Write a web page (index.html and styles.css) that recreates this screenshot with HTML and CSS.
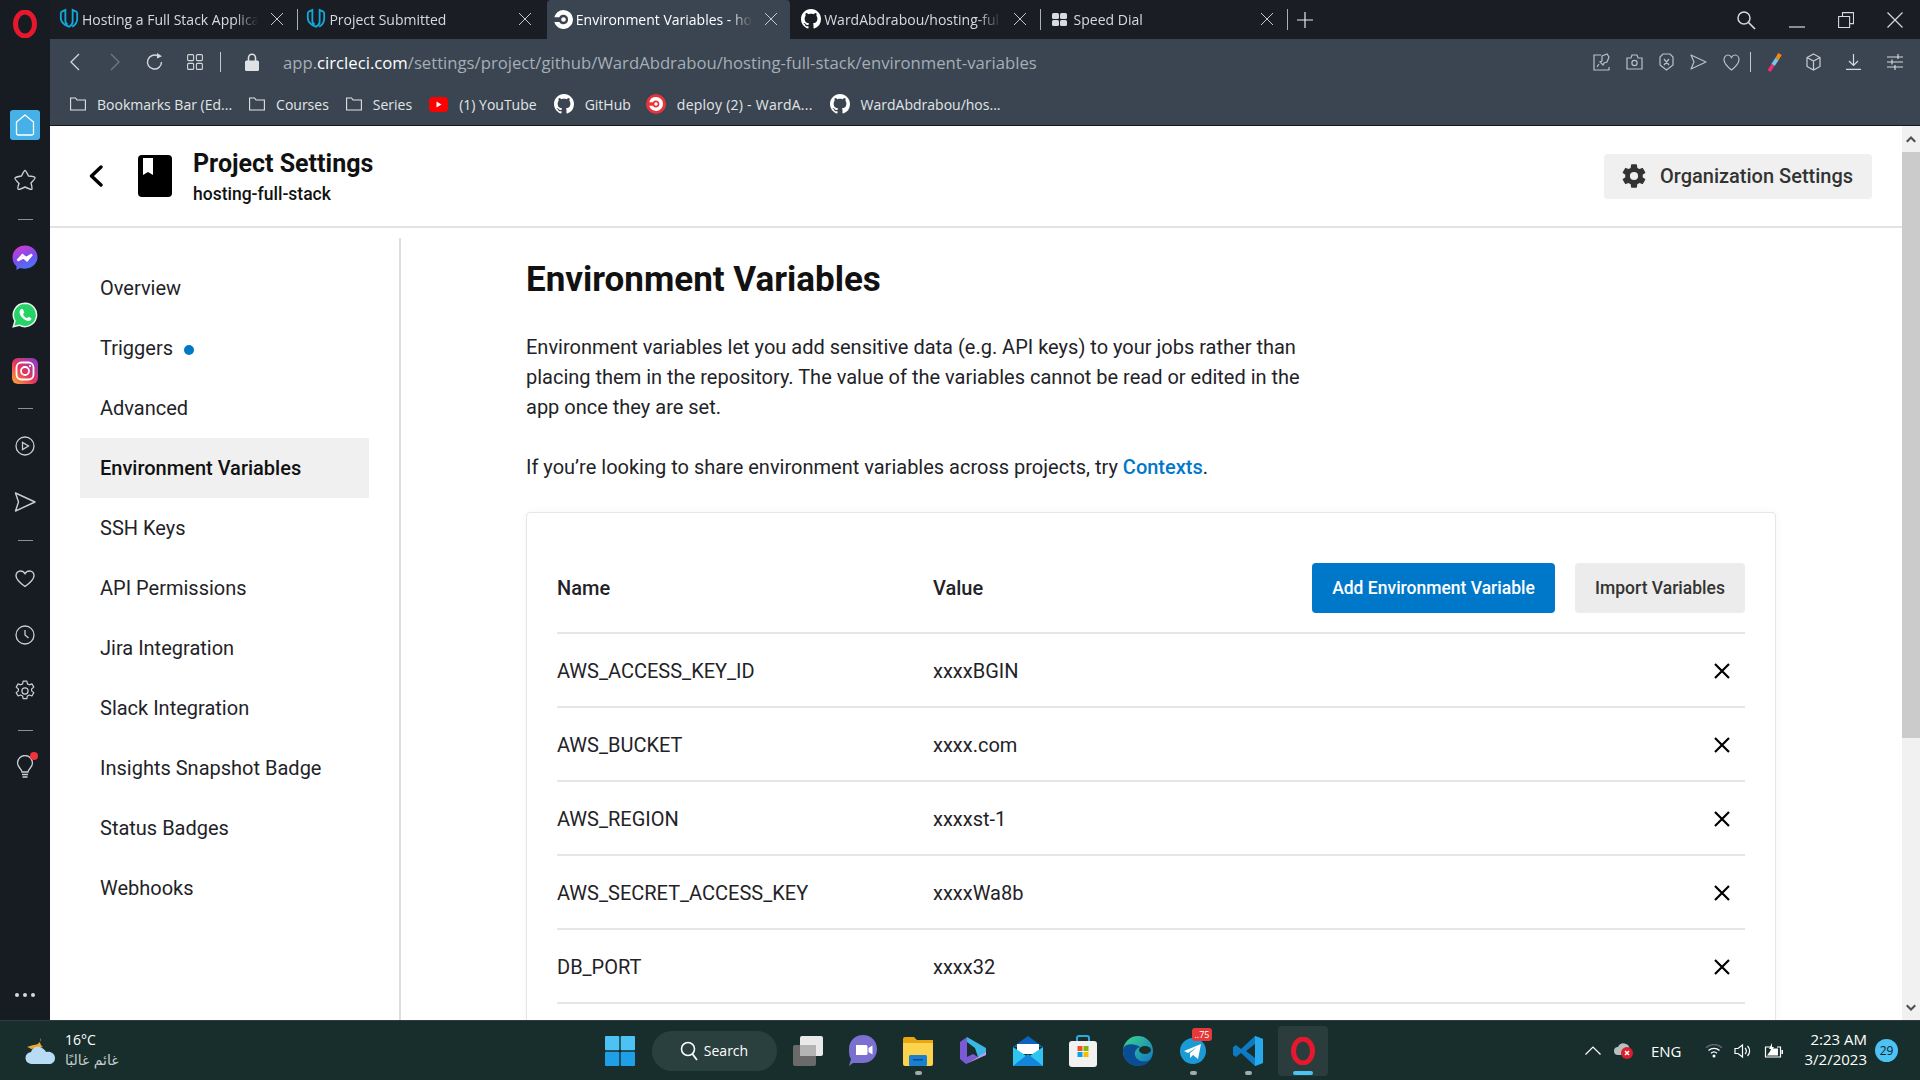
FILE: index.html
```html
<!DOCTYPE html>
<html>
<head>
    <title>Environment Variables - hosting-full-stack</title>
    <link rel="stylesheet" href="styles.css">
</head>

<body>
    <!-- Shared icons -->
    <svg class="sprites" width="0" height="0">
        <symbol id="i-github" viewBox="0 0 16 16"><path fill="#fff" d="M8 0C3.58 0 0 3.58 0 8c0 3.54 2.29 6.53 5.47 7.59.4.07.55-.17.55-.38 0-.19-.01-.82-.01-1.49-2.01.37-2.53-.49-2.69-.94-.09-.23-.48-.94-.82-1.13-.28-.15-.68-.52-.01-.53.63-.01 1.08.58 1.23.82.72 1.21 1.87.87 2.33.66.07-.52.28-.87.51-1.07-1.78-.2-3.64-.89-3.64-3.95 0-.87.31-1.59.82-2.15-.08-.2-.36-1.02.08-2.12 0 0 .67-.21 2.2.82.64-.18 1.32-.27 2-.27.68 0 1.36.09 2 .27 1.53-1.04 2.2-.82 2.2-.82.44 1.1.16 1.92.08 2.12.51.56.82 1.27.82 2.15 0 3.07-1.87 3.75-3.65 3.95.29.25.54.73.54 1.48 0 1.07-.01 1.93-.01 2.2 0 .21.15.46.55.38A8.013 8.013 0 0016 8c0-4.42-3.58-8-8-8z"/></symbol>
        <symbol id="i-udacity" viewBox="0 0 22 24"><path fill="none" stroke="#12a8dc" stroke-width="2" d="M2 4.5 7 2v12c0 2 1 3.500 2.500 4M20 4.500 15 2v13c0 3-2 4.500-4 5.500-2-1-4-1.500-6-3.500-2-1.500-3-3-3-6V4.500M20 4.500V12c0 4-3 7-5.500 8.500"/></symbol>
        <symbol id="i-close" viewBox="0 0 14 14"><path fill="none" stroke="#c4c9ce" stroke-width="1" d="M1 1l12 12M13 1 1 13"/></symbol>
        <symbol id="i-folder" viewBox="0 0 16 14"><path fill="none" stroke="#dfe3e7" stroke-width="1.100" d="M.6 1h5l1.400 2h8.400v10H.6z"/></symbol>
        <symbol id="i-x" viewBox="0 0 16 16"><path fill="none" stroke="#000" stroke-width="2.200" d="M1 1l14 14M15 1 1 15"/></symbol>
        <symbol id="i-circleci" viewBox="0 0 20 20"><path fill="#fff" d="M10 0a10 10 0 1 1-9.700 12.500h5.200a5 5 0 1 0 0-5H.3A10 10 0 0 1 10 0z"/><circle cx="10" cy="10" r="2.400" fill="#fff"/></symbol>
        <symbol id="i-opera" viewBox="0 0 24 28"><ellipse cx="12" cy="14" rx="9.500" ry="12" fill="none" stroke="#e6182d" stroke-width="5"/></symbol>
    </svg>

    <div class="window">
        <!-- Opera side rail -->
        <aside class="rail">
            <svg class="rail-logo" width="24" height="28"><use href="#i-opera"/></svg>
            <div class="rail-home">
                <svg width="20" height="22" viewBox="0 0 20 22"><path fill="none" stroke="#fff" stroke-width="1.300" d="M10 1 1.500 8v11.500q0 1.500 1.500 1.500h14q1.500 0 1.500-1.500V8z"/></svg>
            </div>
            <svg class="rail-star" width="22" height="22" viewBox="0 0 22 22"><path fill="none" stroke="#c9ced3" stroke-width="1.400" stroke-linejoin="round" d="M11 1.500c.8 0 3.500 5.500 3.500 5.500s6 .5 6.500 1.500-4 5.500-4 5.500 1.500 5.500.8 6.200S11 18 11 18s-5.800 2.900-6.800 2.200S5 14.500 5 14.500.5 10 1 9s6.500-2 6.500-2 2.700-5.500 3.500-5.500z"/></svg>
            <div class="rail-dash dash-a"></div>
            <svg class="rail-app app-msg" width="26" height="26" viewBox="0 0 26 26">
                <defs><linearGradient id="g-msg" x1="0.300" y1="0" x2="0.700" y2="1"><stop offset="0" stop-color="#d13ad0"/><stop offset="0.500" stop-color="#7a4df0"/><stop offset="1" stop-color="#3f7df5"/></linearGradient></defs>
                <path fill="url(#g-msg)" d="M13 .5C6 .5.500 5.600.500 12.500c0 3.500 1.500 6.600 4 8.800V25l3.500-2c1.600.5 3.200.7 5 .7 7 0 12.500-5.200 12.500-11.600C25.500 5.600 20 .5 13 .5z"/>
                <path fill="none" stroke="#fff" stroke-width="2.200" d="M5.500 15.500 10.500 10l3.500 3 6-3.500-5 6-3.500-3z"/>
            </svg>
            <svg class="rail-app app-wa" width="26" height="26" viewBox="0 0 26 26">
                <path fill="#25d366" stroke="#e9f3ec" stroke-width="1.500" d="M13 1.200a11.700 11.700 0 0 0-10 17.700L1.300 24.800l6-1.600A11.700 11.700 0 1 0 13 1.200z"/>
                <path fill="#fff" d="M9.500 7c-.7 0-2 1-2 3 0 3 3.500 8 8.500 9 2 .3 3.300-1 3.500-2.500l-3-1.700-1.300 1.500c-1.700-.5-3.700-2.500-4.200-4.300l1.300-1.300L11 7.200z"/>
            </svg>
            <svg class="rail-app app-ig" width="26" height="26" viewBox="0 0 26 26">
                <defs><linearGradient id="g-ig" x1="0" y1="1" x2="1" y2="0"><stop offset="0" stop-color="#f9b233"/><stop offset="0.450" stop-color="#e8355c"/><stop offset="1" stop-color="#7a3fd0"/></linearGradient></defs>
                <rect width="26" height="26" rx="6" fill="url(#g-ig)"/>
                <rect x="4.500" y="4.500" width="17" height="17" rx="5" fill="none" stroke="#fff" stroke-width="1.800"/>
                <circle cx="13" cy="13" r="4" fill="none" stroke="#fff" stroke-width="1.800"/>
                <circle cx="18" cy="8" r="1.100" fill="#fff"/>
            </svg>
            <div class="rail-dash dash-b"></div>
            <svg class="rail-icon icon-play" width="20" height="20" viewBox="0 0 20 20"><circle cx="10" cy="10" r="9" fill="none" stroke="#c9ced3" stroke-width="1.300"/><path fill="none" stroke="#c9ced3" stroke-width="1.300" d="M7.500 6.500v7l6-3.500z"/></svg>
            <svg class="rail-icon icon-send" width="22" height="20" viewBox="0 0 22 20"><path fill="none" stroke="#c9ced3" stroke-width="1.400" stroke-linejoin="round" d="M1.500 1 21 10 1.500 19l3-9z"/></svg>
            <div class="rail-dash dash-c"></div>
            <svg class="rail-icon icon-heart" width="20" height="18" viewBox="0 0 20 18"><path fill="none" stroke="#c9ced3" stroke-width="1.400" d="M10 16.500C5 13 1 10 1 5.800 1 3 3 1 5.500 1 7.500 1 9 2 10 3.700 11 2 12.500 1 14.500 1 17 1 19 3 19 5.800 19 10 15 13 10 16.500z"/></svg>
            <svg class="rail-icon icon-clock" width="20" height="20" viewBox="0 0 20 20"><circle cx="10" cy="10" r="9" fill="none" stroke="#c9ced3" stroke-width="1.300"/><path fill="none" stroke="#c9ced3" stroke-width="1.300" d="M10 5v5l3.500 3"/></svg>
            <svg class="rail-icon icon-gear" width="22" height="22" viewBox="0 0 20 20"><path fill="none" stroke="#c9ced3" stroke-width="1.100" stroke-linejoin="round" d="M8.300 1h3.400l.5 2.500 1.700.9 2.400-.9 1.700 3-2 1.600v1.800l2 1.600-1.700 3-2.400-.9-1.700.9-.5 2.500H8.300l-.5-2.500-1.700-.9-2.400.9-1.700-3 2-1.600V8.100l-2-1.600 1.700-3 2.400.9 1.700-.9z"/><circle cx="10" cy="10" r="2.800" fill="none" stroke="#c9ced3" stroke-width="1.100"/></svg>
            <div class="rail-dash dash-d"></div>
            <div class="rail-bulb">
                <svg width="18" height="24" viewBox="0 0 18 24"><path fill="none" stroke="#c9ced3" stroke-width="1.300" d="M6 17c0-3-4.500-4.500-4.500-9a7.500 7.500 0 0 1 15 0c0 4.500-4.500 6-4.500 9zM6 19.500h6M6.500 22h5"/></svg>
                <span class="bulb-dot"></span>
            </div>
            <div class="rail-dots"><span></span><span></span><span></span></div>
        </aside>

        <div class="browser">
            <!-- Tabs -->
            <div class="tabbar">
                <div class="tab">
                    <svg class="tab-icon" width="20" height="22"><use href="#i-udacity"/></svg>
                    <span class="tab-title">Hosting a Full Stack Applica</span>
                    <svg class="tab-close" width="14" height="14"><use href="#i-close"/></svg>
                </div>
                <div class="tab">
                    <svg class="tab-icon" width="20" height="22"><use href="#i-udacity"/></svg>
                    <span class="tab-title">Project Submitted</span>
                    <svg class="tab-close" width="14" height="14"><use href="#i-close"/></svg>
                </div>
                <div class="tab tab-active">
                    <svg class="tab-icon" width="19" height="19"><use href="#i-circleci"/></svg>
                    <span class="tab-title">Environment Variables - ho</span>
                    <svg class="tab-close" width="14" height="14"><use href="#i-close"/></svg>
                </div>
                <div class="tab">
                    <svg class="tab-icon" width="20" height="20"><use href="#i-github"/></svg>
                    <span class="tab-title">WardAbdrabou/hosting-ful</span>
                    <svg class="tab-close" width="14" height="14"><use href="#i-close"/></svg>
                </div>
                <div class="tab tab-split">
                    <svg class="tab-icon" width="15" height="13" viewBox="0 0 15 13"><rect width="7" height="6" rx="1.500" fill="#d8dcdf"/><rect x="8" width="7" height="6" rx="1.500" fill="#d8dcdf"/><rect y="7" width="7" height="6" rx="1.500" fill="#d8dcdf"/><rect x="8" y="7" width="7" height="6" rx="1.500" fill="#d8dcdf"/></svg>
                    <span class="tab-title">Speed Dial</span>
                    <svg class="tab-close" width="14" height="14"><use href="#i-close"/></svg>
                </div>
                <div class="tab-new">
                    <svg width="16" height="16" viewBox="0 0 16 16"><path fill="none" stroke="#e6e9ec" stroke-width="1.200" d="M8 0v16M0 8h16"/></svg>
                </div>
                <div class="win-controls">
                    <svg width="20" height="20" viewBox="0 0 20 20"><circle cx="8" cy="8" r="6" fill="none" stroke="#d5d9dc" stroke-width="1.500"/><path stroke="#d5d9dc" stroke-width="1.700" d="M12.500 12.500 19 19"/></svg>
                    <svg width="16" height="16" viewBox="0 0 16 16"><path stroke="#d5d9dc" stroke-width="1.200" d="M0 15h16"/></svg>
                    <svg width="16" height="16" viewBox="0 0 16 16"><path fill="none" stroke="#d5d9dc" stroke-width="1.100" d="M.6 4.500h11v11H.6zM4.500 4.500V.6h11v11h-3.900"/></svg>
                    <svg width="16" height="16" viewBox="0 0 16 16"><path fill="none" stroke="#d5d9dc" stroke-width="1.200" d="M.5.500l15 15M15.500.500l-15 15"/></svg>
                </div>
            </div>

            <!-- Address bar -->
            <div class="toolbar">
                <svg class="nav-back" width="10" height="18" viewBox="0 0 10 18"><path fill="none" stroke="#d3d7db" stroke-width="1.300" d="M9 1 1 9l8 8"/></svg>
                <svg class="nav-forward" width="10" height="18" viewBox="0 0 10 18"><path fill="none" stroke="#6f7a85" stroke-width="1.300" d="M1 1l8 8-8 8"/></svg>
                <svg class="nav-reload" width="18" height="18" viewBox="0 0 18 18"><path fill="none" stroke="#d3d7db" stroke-width="1.400" d="M15.500 9A7 7 0 1 1 12 3"/><path fill="#d3d7db" d="M11 0l5 3.200-5 2.300z"/></svg>
                <svg class="nav-grid" width="16" height="16" viewBox="0 0 16 16"><g fill="none" stroke="#d3d7db" stroke-width="1.100"><rect x=".6" y=".6" width="6" height="6" rx="1"/><rect x="9.400" y=".6" width="6" height="6" rx="1"/><rect x=".6" y="9.400" width="6" height="6" rx="1"/><rect x="9.400" y="9.400" width="6" height="6" rx="1"/></g></svg>
                <span class="bar-sep sep-url"></span>
                <svg class="nav-lock" width="14" height="18" viewBox="0 0 14 18"><path fill="none" stroke="#dfe2e5" stroke-width="1.600" d="M3.500 8V4.800a3.500 3.500 0 0 1 7 0V8"/><rect y="7.500" width="14" height="10.500" rx="1.500" fill="#dfe2e5"/></svg>
                <div class="url"><span>app.</span><b>circleci.com</b><span>/settings/project/github/WardAbdrabou/hosting-full-stack/environment-variables</span></div>
                <div class="bar-tools">
                    <div class="tool-group">
                        <svg width="17" height="18" viewBox="0 0 17 18"><path fill="none" stroke="#b9c0c7" stroke-width="1.200" d="M8 2H1v15h15v-3M9 3l5-2 2 3-2 5-3 1-1 2-3-3 2-1zM6 11l-2 3"/></svg>
                        <svg width="17" height="16" viewBox="0 0 17 16"><path fill="none" stroke="#b9c0c7" stroke-width="1.200" d="M1 4h4l1-3h5l1 3h4v11H1z"/><circle cx="8.500" cy="9" r="2.600" fill="none" stroke="#b9c0c7" stroke-width="1.200"/></svg>
                        <svg width="15" height="18" viewBox="0 0 15 18"><path fill="none" stroke="#b9c0c7" stroke-width="1.200" d="M4 1h7l3 3v8l-6.500 5L1 12V4zM5 6l5 6M10 6l-5 6"/></svg>
                        <svg width="17" height="16" viewBox="0 0 17 16"><path fill="none" stroke="#b9c0c7" stroke-width="1.200" stroke-linejoin="round" d="M1 1l15 7-15 7 3-7z"/></svg>
                        <svg width="17" height="17" viewBox="0 0 17 17"><path fill="none" stroke="#b9c0c7" stroke-width="1.200" d="M8.500 16C4 12.500 1 9.500 1 5.500 1 3 2.800 1 5 1c1.600 0 2.800 1 3.500 2.500C9.200 2 10.400 1 12 1c2.200 0 4 2 4 4.500 0 4-3 7-7.500 10.500z"/></svg>
                    </div>
                    <span class="bar-sep sep-tools"></span>
                    <svg class="tool-dropper" width="16" height="20" viewBox="0 0 16 20"><path stroke="#f28a0f" stroke-width="4" d="M14 2l-3 5"/><path stroke="#7cc3ee" stroke-width="4" d="M11 7l-4 6"/><path stroke="#ee2f72" stroke-width="3.500" d="M7 13l-4 6"/></svg>
                    <svg class="tool-cube" width="15" height="18" viewBox="0 0 15 18"><path fill="none" stroke="#c8cdd2" stroke-width="1.200" d="M7.500 1 14 4.500v9L7.500 17 1 13.500v-9zM1 4.500 7.500 8 14 4.500M7.500 8v9"/></svg>
                    <svg class="tool-down" width="15" height="16" viewBox="0 0 15 16"><path fill="none" stroke="#d5d9dc" stroke-width="1.200" d="M7.500 0v11M3 7l4.500 4.500L12 7M0 15.300h15"/></svg>
                    <svg class="tool-sliders" width="16" height="16" viewBox="0 0 16 16"><path fill="none" stroke="#d5d9dc" stroke-width="1.200" d="M0 3h16M0 8h16M0 13h16M11 0v5M5 5.500v5M8 11v5"/></svg>
                </div>
            </div>

            <!-- Bookmarks -->
            <div class="bookmarks">
                <div class="mark"><svg width="16" height="14"><use href="#i-folder"/></svg><span>Bookmarks Bar (Ed...</span></div>
                <div class="mark"><svg width="16" height="14"><use href="#i-folder"/></svg><span>Courses</span></div>
                <div class="mark"><svg width="16" height="14"><use href="#i-folder"/></svg><span>Series</span></div>
                <div class="mark"><svg width="19" height="15" viewBox="0 0 19 15"><rect width="19" height="15" rx="4" fill="#f00"/><path fill="#fff" d="M7.500 4.500v6l5-3z"/></svg><span>(1) YouTube</span></div>
                <div class="mark"><svg width="20" height="20"><use href="#i-github"/></svg><span>GitHub</span></div>
                <div class="mark mark-wide"><svg width="20" height="20" viewBox="0 0 20 20"><circle cx="10" cy="10" r="10" fill="#e8343b"/><path fill="#fff" d="M10 3a7 7 0 1 1-6.800 8.700h3.700a3.500 3.500 0 1 0 0-3.400H3.200A7 7 0 0 1 10 3z"/><circle cx="10" cy="10" r="1.700" fill="#fff"/></svg><span>deploy (2) - WardA...</span></div>
                <div class="mark"><svg width="20" height="20"><use href="#i-github"/></svg><span>WardAbdrabou/hos...</span></div>
            </div>

            <!-- Page -->
            <div class="viewport">
                <div class="page">
                    <header class="page-head">
                        <svg class="head-back" width="14" height="22" viewBox="0 0 14 22"><path fill="none" stroke="#000" stroke-width="3.400" stroke-linecap="round" stroke-linejoin="round" d="M12 2 2.500 11l9.500 9"/></svg>
                        <svg class="head-book" width="34" height="42" viewBox="0 0 34 42"><path fill="#000" d="M4 0h26q4 0 4 4v34q0 4-4 4H4q-4 0-4-4V4q0-4 4-4z"/><path fill="#fff" d="M5 3h10v17l-5-3-5 3z"/></svg>
                        <div class="head-text">
                            <h2>Project Settings</h2>
                            <p>hosting-full-stack</p>
                        </div>
                        <button class="org-btn">
                            <svg width="28" height="28" viewBox="0 0 24 24"><path fill="#333" d="M19.430 12.980c.04-.32.070-.64.070-.98s-.03-.66-.07-.98l2.110-1.650a.5.500 0 0 0 .12-.64l-2-3.460a.5.500 0 0 0-.61-.22l-2.490 1a7.300 7.300 0 0 0-1.690-.98l-.38-2.650A.49.490 0 0 0 14 2h-4a.49.490 0 0 0-.49.420l-.38 2.650c-.61.250-1.170.590-1.690.98l-2.490-1a.49.490 0 0 0-.61.220l-2 3.460a.49.490 0 0 0 .12.640l2.110 1.650c-.04.320-.07.650-.07.980s.03.660.07.980l-2.110 1.650a.5.500 0 0 0-.12.640l2 3.460c.12.220.39.300.61.220l2.490-1c.52.400 1.080.730 1.690.98l.38 2.650c.03.240.24.420.49.420h4c.25 0 .46-.18.490-.42l.38-2.650c.61-.25 1.170-.59 1.690-.98l2.490 1c.23.090.49 0 .61-.22l2-3.460a.5.500 0 0 0-.12-.64zM12 15.500a3.500 3.500 0 1 1 0-7 3.500 3.500 0 0 1 0 7z"/></svg>
                            <span>Organization Settings</span>
                        </button>
                    </header>

                    <div class="settings">
                        <nav class="side-nav">
                            <a>Overview</a>
                            <a>Triggers <span class="nav-dot"></span></a>
                            <a>Advanced</a>
                            <a class="active">Environment Variables</a>
                            <a>SSH Keys</a>
                            <a>API Permissions</a>
                            <a>Jira Integration</a>
                            <a>Slack Integration</a>
                            <a>Insights Snapshot Badge</a>
                            <a>Status Badges</a>
                            <a>Webhooks</a>
                        </nav>

                        <main class="content">
                            <h1>Environment Variables</h1>
                            <p class="intro">Environment variables let you add sensitive data (e.g. API keys) to your jobs rather than placing them in the repository. The value of the variables cannot be read or edited in the app once they are set.</p>
                            <p class="intro intro-second">If you’re looking to share environment variables across projects, try <a class="link">Contexts</a>.</p>

                            <div class="card">
                                <table class="env-table">
                                    <thead>
                                        <tr>
                                            <th class="col-name">Name</th>
                                            <th class="col-value">Value</th>
                                            <th class="col-actions">
                                                <button class="btn btn-primary">Add Environment Variable</button>
                                                <button class="btn btn-grey">Import Variables</button>
                                            </th>
                                        </tr>
                                    </thead>
                                    <tbody>
                                        <tr><td>AWS_ACCESS_KEY_ID</td><td>xxxxBGIN</td><td class="cell-x"><svg width="16" height="16"><use href="#i-x"/></svg></td></tr>
                                        <tr><td>AWS_BUCKET</td><td>xxxx.com</td><td class="cell-x"><svg width="16" height="16"><use href="#i-x"/></svg></td></tr>
                                        <tr><td>AWS_REGION</td><td>xxxxst-1</td><td class="cell-x"><svg width="16" height="16"><use href="#i-x"/></svg></td></tr>
                                        <tr><td>AWS_SECRET_ACCESS_KEY</td><td>xxxxWa8b</td><td class="cell-x"><svg width="16" height="16"><use href="#i-x"/></svg></td></tr>
                                        <tr><td>DB_PORT</td><td>xxxx32</td><td class="cell-x"><svg width="16" height="16"><use href="#i-x"/></svg></td></tr>
                                    </tbody>
                                </table>
                            </div>
                        </main>
                    </div>
                </div>

                <div class="scrollbar">
                    <div class="scroll-btn"><svg width="10" height="7" viewBox="0 0 10 7"><path fill="#505050" d="M5 0l5 5-1.500 1.500L5 3 1.500 6.500 0 5z"/></svg></div>
                    <div class="scroll-thumb"></div>
                    <div class="scroll-track"></div>
                    <div class="scroll-btn"><svg width="10" height="7" viewBox="0 0 10 7"><path fill="#505050" d="M5 7 0 2 1.500.500 5 4 8.500.500 10 2z"/></svg></div>
                </div>
            </div>
        </div>
    </div>

    <!-- Windows taskbar -->
    <footer class="taskbar">
        <div class="weather">
            <svg width="32" height="30" viewBox="0 0 32 30"><path fill="#f2a72e" d="M17 2c-2 3-1 7 2 9l-12 2c-1-1-3-2-4-2 3-1 5-2 7-2 4 0 7-3 7-7z"/><path fill="#b9dcf5" d="M8 28a6 6 0 0 1-1-12c1-4 5-6 9-5 3 1 5 3 6 5 5-1 9 2 9 6s-3 6-6 6z"/></svg>
            <div class="weather-text">
                <span>16°C</span>
                <span class="weather-ar">غائم غالبًا</span>
            </div>
        </div>

        <div class="task-center">
            <svg class="task-start" width="30" height="30" viewBox="0 0 30 30"><g fill="#4cc2f5"><rect width="14.300" height="14.300" rx="1"/><rect x="15.700" width="14.300" height="14.300" rx="1"/></g><g fill="#1f9fe6"><rect y="15.700" width="14.300" height="14.300" rx="1"/><rect x="15.700" y="15.700" width="14.300" height="14.300" rx="1"/></g></svg>
            <div class="task-search">
                <svg width="18" height="20" viewBox="0 0 18 20"><circle cx="8" cy="8" r="6.500" fill="none" stroke="#fff" stroke-width="1.600"/><path stroke="#fff" stroke-width="1.800" d="M12.500 13 17 19"/></svg>
                <span>Search</span>
            </div>
            <div class="task-icons">
                <div class="task-app"><svg width="30" height="30" viewBox="0 0 30 30"><rect x="7" width="23" height="20" rx="2" fill="#e9e9e9"/><rect y="9" width="23" height="21" rx="2" fill="#6a6a6a"/><rect x="7" y="9" width="16" height="11" fill="#b4b4b4"/></svg></div>
                <div class="task-app"><svg width="30" height="32" viewBox="0 0 30 32"><path fill="#7b6fd0" d="M15 0c8 0 14 6 14 14 0 8-6 14-14 14H5l-4 3 2-7C1 21 1 18 1 14 1 6 7 0 15 0z"/><path fill="#fff" d="M8 10h10q1.500 0 1.500 1.500v7q0 1.500-1.500 1.500H8zM20.500 13l4-2.500v9l-4-2.500z"/></svg></div>
                <div class="task-app task-open"><svg width="30" height="30" viewBox="0 0 30 30"><path fill="#e8a613" d="M0 3q0-2 2-2h9l3 3h16v24H0z"/><path fill="#fcd34d" d="M0 7h30v21q0 2-2 2H2q-2 0-2-2z"/><rect x="6" y="19" width="18" height="11" rx="1.500" fill="#1a7fd1"/><rect x="10" y="23" width="10" height="1.500" fill="#0c4e87"/></svg></div>
                <div class="task-app"><svg width="28" height="30" viewBox="0 0 28 30"><path fill="#7b5ad6" d="M8 1 1 6v17l6 5 12-7-5-3-6 3z"/><path fill="#3bb7e5" d="M8 1l19 11v7l-8 2-3-9-8-6z"/><path fill="#c49cf0" d="M7 28l20-9v-3l-8 5z"/></svg></div>
                <div class="task-app"><svg width="30" height="30" viewBox="0 0 30 30"><path fill="#0b63c0" d="M15 0 0 11h30z"/><path fill="#fff" d="M4 8h22v10H4z"/><path fill="#2ec5f2" d="M0 11l15 10 15-10v19H0z"/><path fill="#1486d9" d="M0 30l15-12 15 12z"/></svg></div>
                <div class="task-app"><svg width="28" height="32" viewBox="0 0 28 32"><path fill="none" stroke="#2ea8e0" stroke-width="2" d="M8 7V3q0-2 2-2h8q2 0 2 2v4"/><rect y="6" width="28" height="26" rx="3" fill="#f2f2f2"/><rect x="8.500" y="11" width="5" height="5" fill="#f25022"/><rect x="14.500" y="11" width="5" height="5" fill="#7fba00"/><rect x="8.500" y="17" width="5" height="5" fill="#00a4ef"/><rect x="14.500" y="17" width="5" height="5" fill="#ffb900"/></svg></div>
                <div class="task-app"><svg width="30" height="30" viewBox="0 0 30 30"><defs><linearGradient id="g-edge" x1="0" y1="0" x2="1" y2="1"><stop offset="0" stop-color="#3bd68a"/><stop offset="1" stop-color="#0f72c9"/></linearGradient></defs><circle cx="15" cy="15" r="15" fill="url(#g-edge)"/><path fill="#0a4d94" d="M0 15c0 9 7 15 15 15 5 0 9-2 12-6-6 3-14 1-15-5-1-4 2-7 5-8C11 7 0 7 0 15z"/><ellipse cx="22" cy="14" rx="6" ry="4" fill="#1a2e2c"/></svg></div>
                <div class="task-app task-open">
                    <svg width="28" height="28" viewBox="0 0 28 28"><circle cx="14" cy="14" r="13" fill="#1b9ad6"/><path fill="#fff" d="M5 14l17-7-3 15-5-4-3 3v-5l7-6-9 6z"/></svg>
                    <span class="task-badge">..75</span>
                </div>
                <div class="task-app task-open"><svg width="30" height="30" viewBox="0 0 30 30"><path fill="#0e7ac4" d="M22 0 8 13 3 9 0 11v8l3 2 5-4 14 13 8-3V3z"/><path fill="#27a9ee" d="M22 0l8 3v24l-8 3z"/><path fill="#1a2e2c" d="M22 8l-9 7 9 7z"/></svg></div>
                <div class="task-app task-active">
                    <svg width="24" height="28"><use href="#i-opera"/></svg>
                    <span class="task-bar"></span>
                </div>
            </div>
        </div>

        <div class="tray">
            <svg class="tray-up" width="16" height="9" viewBox="0 0 16 9"><path fill="none" stroke="#fff" stroke-width="1.200" d="M.5 8.500 8 1l7.500 7.500"/></svg>
            <svg class="tray-cloud" width="20" height="17" viewBox="0 0 20 17"><path fill="#b8bfbf" d="M5 13a4 4 0 0 1 0-8c1-3 5-5 8-3 3 1 4 4 3 6l-3 5z"/><circle cx="14" cy="11" r="6" fill="#d8202f"/><path stroke="#fff" stroke-width="1.500" d="M12 9l4 4M16 9l-4 4"/></svg>
            <span class="tray-lang">ENG</span>
            <svg class="tray-wifi" width="18" height="14" viewBox="0 0 18 14"><g fill="none" stroke="#fff" stroke-width="1.300"><path d="M3.500 6.500a8 8 0 0 1 11 0M6 9.200a4.500 4.500 0 0 1 6 0"/><path stroke="#667" d="M1 3.800a11.500 11.500 0 0 1 16 0"/></g><circle cx="9" cy="12" r="1.500" fill="#fff"/></svg>
            <svg class="tray-vol" width="19" height="16" viewBox="0 0 19 16"><path fill="none" stroke="#fff" stroke-width="1.200" d="M1 5.500h3L8.500 2v12L4 10.500H1zM11 5a4 4 0 0 1 0 6M13.500 3a7 7 0 0 1 0 10"/></svg>
            <svg class="tray-batt" width="20" height="16" viewBox="0 0 20 16"><path fill="none" stroke="#fff" stroke-width="1.200" d="M6 4H1.500v10h15V4H13"/><path fill="#fff" d="M17.500 7H19v4h-1.500zM3 12.500l5-7h6v7z"/><path fill="#fff" d="M8 0 5 6h2l-1 4 4-6H8z"/></svg>
            <div class="tray-clock">
                <span>2:23 AM</span>
                <span>3/2/2023</span>
            </div>
            <span class="tray-count">29</span>
        </div>
    </footer>
</body>
</html>
```

FILE: styles.css
```css
* {
    box-sizing: border-box;
}

html, body {
    margin: 0;
    padding: 0;
}

body {
    width: 1920px;
    height: 1080px;
    overflow: hidden;
    display: flex;
    flex-direction: column;
    font-family: Roboto, "Liberation Sans", sans-serif;
    background-color: #fff;
}

.sprites {
    position: absolute;
}

.window {
    display: flex;
    height: 1020px;
}

/* Side rail */
.rail {
    width: 50px;
    flex-shrink: 0;
    background-color: #171c22;
    display: flex;
    flex-direction: column;
    align-items: center;
}

.rail svg {
    display: block;
    flex-shrink: 0;
}

.rail-logo { margin-top: 10px; }

.rail-home {
    width: 30px;
    height: 30px;
    margin-top: 72px;
    border-radius: 3px;
    background-color: #45b1e8;
    display: flex;
    align-items: center;
    justify-content: center;
}

.rail-star { margin-top: 29px; }
.rail-dash { width: 15px; height: 1px; background-color: #8a9098; flex-shrink: 0; }
.dash-a { margin-top: 28px; }
.app-msg { margin-top: 25px; }
.app-wa { margin-top: 31px; }
.app-ig { margin-top: 30px; }
.dash-b { margin-top: 24px; }
.icon-play { margin-top: 27px; }
.icon-send { margin-top: 36px; }
.dash-c { margin-top: 28px; }
.icon-heart { margin-top: 29px; }
.icon-clock { margin-top: 37px; }
.icon-gear { margin-top: 35px; }
.dash-d { margin-top: 28px; }

.rail-bulb {
    position: relative;
    margin-top: 24px;
}

.bulb-dot {
    position: absolute;
    top: -3px;
    right: -4px;
    width: 8px;
    height: 8px;
    border-radius: 50%;
    background-color: #f0323c;
}

.rail-dots {
    margin-top: auto;
    margin-bottom: 23px;
    display: flex;
    gap: 4px;
}

.rail-dots span {
    width: 4px;
    height: 4px;
    border-radius: 50%;
    background-color: #d5d9dc;
}

/* Browser chrome */
.browser {
    flex: 1;
    min-width: 0;
    display: flex;
    flex-direction: column;
}

.tabbar {
    height: 39px;
    background-color: #1a1e24;
    display: flex;
    align-items: stretch;
    font-family: "Open Sans", "Liberation Sans", sans-serif;
    font-size: 14px;
    color: #d7dbde;
}

.tab {
    width: 247.4px;
    padding: 0 13px 1px 9px;
    display: flex;
    align-items: center;
    gap: 3px;
    position: relative;
}

.tab:nth-child(2)::before,
.tab-split::before {
    content: "";
    position: absolute;
    left: 0;
    top: 9px;
    bottom: 9px;
    width: 1px;
    background-color: #a8b0b8;
}

.tab-active {
    background-color: #3a4551;
    color: #fff;
    border-radius: 4px 4px 0 0;
    margin: 0 2px;
    width: 243.4px;
    padding-left: 7px;
    padding-right: 12px;
}

.tab-split {
    gap: 7px;
    padding-left: 12px;
}

.tab-title {
    flex: 1;
    min-width: 0;
    white-space: nowrap;
    overflow: hidden;
    -webkit-mask-image: linear-gradient(to right, #000 85%, transparent 98%);
    mask-image: linear-gradient(to right, #000 85%, transparent 98%);
}

.tab-icon, .tab-close {
    flex-shrink: 0;
}

.tab-close {
    margin-left: 5px;
}

.tab-new {
    width: 36px;
    display: flex;
    align-items: center;
    justify-content: center;
    position: relative;
    border-left: 1px solid #a8b0b8;
    margin: 9px 0;
}

.win-controls {
    margin-left: auto;
    padding-right: 17px;
    display: flex;
    align-items: center;
    justify-content: flex-end;
    gap: 33px;
}

.toolbar {
    height: 45px;
    padding-top: 1px;
    background-color: #3a4551;
    display: flex;
    align-items: center;
    padding-left: 20px;
}

.toolbar svg {
    flex-shrink: 0;
}

.nav-forward { margin-left: 30px; }
.nav-reload { margin-left: 26px; }
.nav-grid { margin-left: 23px; }

.bar-sep {
    width: 1px;
    height: 20px;
    background-color: #c3c8cd;
    flex-shrink: 0;
}

.sep-url { margin-left: 17px; }
.nav-lock { margin-left: 24px; }

.url {
    margin-left: 24px;
    font-family: "Open Sans", "Liberation Sans", sans-serif;
    font-size: 16.7px;
    color: #a6aeb6;
    white-space: nowrap;
}

.url b {
    font-weight: 400;
    color: #fff;
}

.bar-tools {
    margin-left: auto;
    padding-right: 17px;
    display: flex;
    align-items: center;
    gap: 15px;
}

.tool-group {
    display: flex;
    align-items: center;
    gap: 16px;
}

.sep-tools { margin-left: -5px; }
.tool-dropper { margin-left: 0; }
.tool-cube { margin-left: 9px; }
.tool-down { margin-left: 10px; }
.tool-sliders { margin-left: 11px; }

.bookmarks {
    height: 42px;
    padding: 0 0 1px 20px;
    background-color: #3a4551;
    border-bottom: 1px solid #15191d;
    display: flex;
    align-items: center;
    gap: 17px;
    font-family: "Open Sans", "Liberation Sans", sans-serif;
    font-size: 14px;
    color: #e2e5e8;
}

.mark {
    display: flex;
    align-items: center;
    gap: 11px;
    white-space: nowrap;
}

.mark-wide {
    margin-left: -2px;
    letter-spacing: 0.25px;
}

/* Page */
.viewport {
    flex: 1;
    min-height: 0;
    display: flex;
}

.page {
    flex: 1;
    min-width: 0;
    display: flex;
    flex-direction: column;
    overflow: hidden;
    color: #1f2328;
}

.page-head {
    height: 102px;
    flex-shrink: 0;
    border-bottom: 2px solid #e3e3e3;
    display: flex;
    align-items: center;
    padding: 0 30px 0 39px;
}

.head-book { margin-left: 35px; }

.head-text {
    margin: 4px 0 0 21px;
    color: #111;
}

.head-text h2 {
    margin: 0;
    font-size: 25px;
    line-height: 32px;
    font-weight: 700;
}

.head-text p {
    margin: 0;
    font-size: 17.5px;
    line-height: 28px;
    font-weight: 500;
}

.org-btn {
    margin-left: auto;
    width: 268px;
    height: 45px;
    border: 0;
    border-radius: 4px;
    background-color: #f0f0f0;
    color: #333;
    font-family: inherit;
    font-size: 20px;
    font-weight: 500;
    display: flex;
    align-items: center;
    gap: 12px;
    padding: 0 0 0 16px;
}

.settings {
    flex: 1;
    min-height: 0;
    display: flex;
}

.side-nav {
    width: 351px;
    margin-top: 10px;
    padding: 20px 30px 0 30px;
    flex-shrink: 0;
    border-right: 2px solid #ddd;
    display: flex;
    flex-direction: column;
}

.side-nav a {
    height: 60px;
    padding-left: 20px;
    display: flex;
    align-items: center;
    font-size: 20px;
    color: #1f2328;
}

.side-nav a.active {
    background-color: #f0f0f0;
    font-weight: 500;
    color: #111;
}

.nav-dot {
    width: 10px;
    height: 10px;
    margin: 3px 0 0 11px;
    border-radius: 50%;
    background-color: #0078ca;
}

.content {
    flex: 1;
    min-width: 0;
    padding: 30px 0 0 125px;
}

.content h1 {
    margin: 0 0 30px 0;
    font-size: 35px;
    line-height: 44px;
    font-weight: 700;
    color: #111;
}

.intro {
    margin: 0;
    width: 790px;
    font-size: 20px;
    line-height: 30px;
    color: #1f2328;
}

.intro-second {
    margin-top: 30px;
    width: auto;
}

.link {
    color: #0078ca;
    font-weight: 500;
}

.card {
    width: 1250px;
    margin-top: 30px;
    padding: 30px 30px 60px 30px;
    border: 1px solid #e6e6e6;
    border-radius: 4px;
    box-shadow: 0 0 8px rgba(0, 0, 0, 0.04);
}

.env-table {
    width: 100%;
    border-collapse: collapse;
    font-size: 20px;
    color: #1f2328;
}

.env-table th, .env-table td {
    padding: 0;
    text-align: left;
    border-bottom: 2px solid #e6e6e6;
}

.env-table th {
    height: 90px;
    font-weight: 500;
}

.env-table td {
    height: 74px;
    padding-top: 2px;
}

.col-name { width: 376px; }
.col-value { width: 260px; }

.env-table .col-actions {
    text-align: right;
    white-space: nowrap;
}

.btn {
    height: 50px;
    border: 0;
    border-radius: 4px;
    font-family: inherit;
    font-size: 17.5px;
    font-weight: 500;
    padding: 0;
}

.btn-primary {
    width: 243px;
    background-color: #0078ca;
    color: #fff;
}

.btn-grey {
    width: 170px;
    margin-left: 15px;
    background-color: #ececec;
    color: #333;
}

.env-table .cell-x {
    text-align: right;
    padding: 0 15px 2px 0;
}

.cell-x svg {
    display: inline-block;
    vertical-align: middle;
}

/* Scrollbar */
.scrollbar {
    width: 18px;
    flex-shrink: 0;
    display: flex;
    flex-direction: column;
    background-color: #f1f1f1;
}

.scroll-btn {
    height: 26px;
    display: flex;
    align-items: center;
    justify-content: center;
}

.scroll-thumb {
    height: 586px;
    background-color: #cbcbcb;
}

.scroll-track {
    flex: 1;
}

/* Taskbar */
.taskbar {
    height: 60px;
    flex-shrink: 0;
    background-color: #182e2c;
    border-top: 1px solid #2b3d3c;
    display: grid;
    grid-template-columns: 1fr auto 1fr;
    align-items: center;
    color: #fff;
    font-family: "Open Sans", "Liberation Sans", sans-serif;
}

.weather {
    display: flex;
    align-items: center;
    padding-left: 24px;
    gap: 9px;
}

.weather-text {
    margin-bottom: 2px;
    display: flex;
    flex-direction: column;
    font-size: 14px;
    line-height: 20px;
}

.weather-ar {
    font-family: "DejaVu Sans", sans-serif;
    font-size: 14px;
    color: #c5cccc;
    direction: rtl;
}

.task-center {
    margin-left: 12px;
    display: flex;
    align-items: center;
}

.task-start {
    margin-right: 17px;
}

.task-search {
    width: 125px;
    height: 40px;
    border-radius: 20px;
    background-color: #2a403e;
    display: flex;
    align-items: center;
    justify-content: center;
    gap: 6px;
    font-size: 14px;
}

.task-icons {
    margin-left: 4px;
    display: flex;
    align-items: center;
}

.task-app {
    width: 55px;
    height: 50px;
    position: relative;
    display: flex;
    align-items: center;
    justify-content: center;
}

.task-open::after {
    content: "";
    position: absolute;
    bottom: 1px;
    left: 24px;
    width: 7px;
    height: 4px;
    border-radius: 2px;
    background-color: #a3acab;
}

.task-active {
    width: 50px;
    margin-left: 2px;
    border-radius: 4px;
    background-color: #2a3d3c;
}

.task-bar {
    position: absolute;
    bottom: 1px;
    left: 15px;
    width: 20px;
    height: 4px;
    border-radius: 2px;
    background-color: #4cc2f5;
}

.task-badge {
    position: absolute;
    top: 2px;
    right: 9px;
    height: 13px;
    padding: 0 2px;
    border-radius: 3px;
    background-color: #e5393a;
    font-size: 9px;
    line-height: 13px;
}

.tray {
    display: flex;
    align-items: center;
    justify-content: flex-end;
    padding-right: 22px;
}

.tray-cloud { margin-left: 12px; }

.tray-lang {
    margin-left: 18px;
    font-size: 15px;
}

.tray-wifi { margin-left: 23px; }
.tray-vol { margin-left: 11px; }
.tray-batt { margin-left: 11px; }

.tray-clock {
    margin: 0 0 3px 21px;
    display: flex;
    flex-direction: column;
    align-items: flex-end;
    font-size: 15px;
    line-height: 20px;
}

.tray-count {
    margin-left: 8px;
    width: 23px;
    height: 23px;
    border-radius: 50%;
    background-color: #4cc2f5;
    color: #10222a;
    font-size: 12px;
    line-height: 23px;
    text-align: center;
}
```
